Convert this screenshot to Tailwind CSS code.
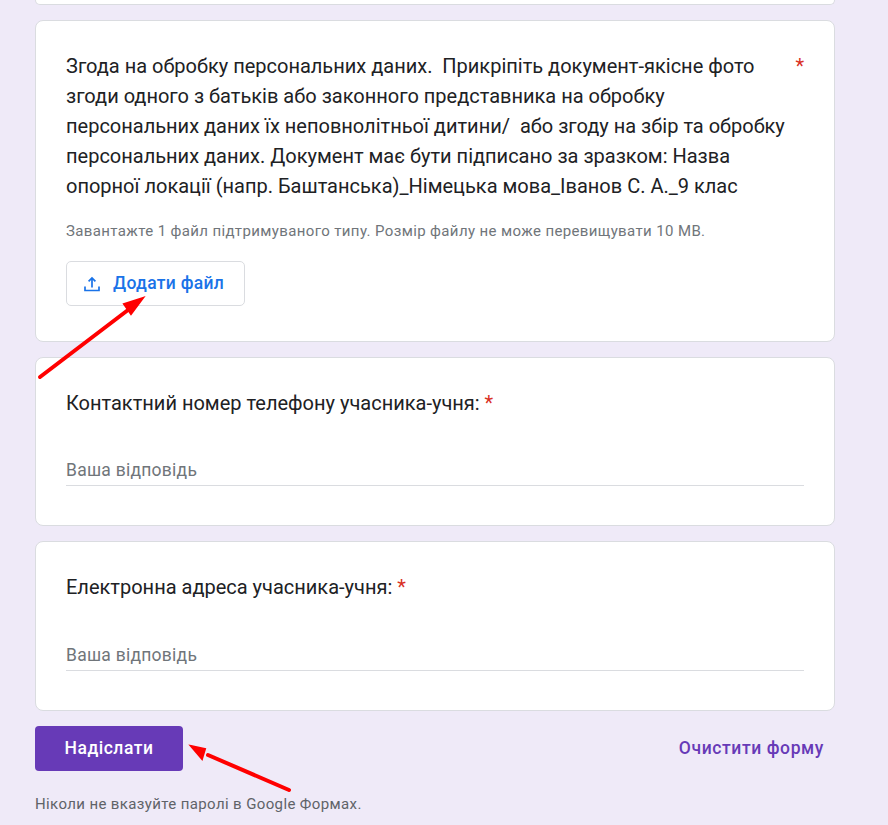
<!DOCTYPE html>
<html lang="en">
  <head>
    <meta charset="UTF-8" />
    <title>Google Forms</title>
    <script src="https://cdn.jsdelivr.net/npm/@tailwindcss/browser@4"></script>
  </head>
  <body class="relative h-[825px] overflow-hidden bg-[#efeaf8] font-['Roboto',sans-serif] text-[#202124]">
    <main class="ml-[35px] flex w-[800px] flex-col gap-[15px]">
      <!-- end of the previous question -->
      <div class="h-[5px] rounded-b-lg border border-t-0 border-[#dadce0] bg-white"></div>

      <!-- file upload -->
      <section class="h-[322px] rounded-lg border border-[#dadce0] bg-white px-[30px] pt-[30px]">
        <div class="flex justify-between">
          <p class="w-[725px] text-[20px] leading-[30px]">
            Згода на обробку персональних даних.&nbsp; Прикріпіть документ-якісне фото згоди одного з батьків або законного представника на обробку персональних даних їх неповнолітньої дитини/&nbsp; або згоду на збір та обробку персональних даних. Документ має бути підписано за зразком: Назва опорної локації (напр. Баштанська)_Німецька мова_Іванов С. А._9 клас
          </p>
          <span class="text-[20px] leading-[30px] text-[#d93025]">*</span>
        </div>
        <p class="mt-[20px] text-[15px] leading-[20px] tracking-[0.375px] text-[#70757a]">
          Завантажте 1 файл підтримуваного типу. Розмір файлу не може перевищувати 10 MB.
        </p>
        <button class="mt-[20px] flex h-[45px] w-[179px] items-center gap-[12px] rounded-[5px] border border-[#dadce0] bg-white pl-[16px] text-[17.5px] font-medium tracking-[0.3px] text-[#1a73e8]">
          <svg class="h-[18px] w-[18px]" viewBox="0 0 18 18" fill="none" stroke="currentColor" stroke-width="1.7">
            <path d="M9 12.5V3M5.6 6.3 9 2.9l3.4 3.4M2 11.5v4h14v-4" />
          </svg>
          Додати файл
        </button>
      </section>

      <!-- phone -->
      <section class="h-[169px] rounded-lg border border-[#dadce0] bg-white px-[30px] pt-[30px]">
        <p class="text-[20px] leading-[30px]">Контактний номер телефону учасника-учня: <span class="text-[#d93025]">*</span></p>
        <div class="mt-[37px] h-[31px] border-b border-[#dadce0] text-[17.5px] leading-[30px] tracking-[0.25px] text-[#70757a]">Ваша відповідь</div>
      </section>

      <!-- email -->
      <section class="h-[170px] rounded-lg border border-[#dadce0] bg-white px-[30px] pt-[30px]">
        <p class="text-[20px] leading-[30px]">Електронна адреса учасника-учня: <span class="text-[#d93025]">*</span></p>
        <div class="mt-[38px] h-[31px] border-b border-[#dadce0] text-[17.5px] leading-[30px] tracking-[0.25px] text-[#70757a]">Ваша відповідь</div>
      </section>

      <!-- actions -->
      <div class="flex items-center justify-between">
        <button class="h-[45px] w-[148px] rounded-[4px] bg-[#673ab7] text-[17.5px] font-medium tracking-[0.5px] text-white">Надіслати</button>
        <button class="mr-[11px] text-[17.5px] font-medium tracking-[0.6px] text-[#673ab7]">Очистити форму</button>
      </div>

      <p class="mt-[8px] text-[15px] leading-[20px] tracking-[0.375px] text-[#5f6368]">Ніколи не вказуйте паролі в Google Формах.</p>
    </main>

    <!-- red annotation arrows -->
    <svg class="absolute left-0 top-0 h-[825px] w-[888px]" viewBox="0 0 888 825" fill="#ff0000" stroke="#ff0000">
      <path d="M40 377 128 310" stroke-width="4" stroke-linecap="round" />
      <path d="M143 298 124 304 131 314Z" stroke-width="2" />
      <path d="M289 790 208 755" stroke-width="4" stroke-linecap="round" />
      <path d="M191 746 205 749 202 759Z" stroke-width="2" />
    </svg>
  </body>
</html>
